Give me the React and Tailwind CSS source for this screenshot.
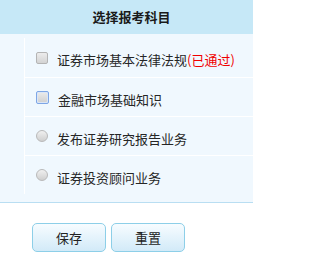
import React from 'react';

const subjects = [
  { name: '证券市场基本法律法规', passed: true, type: 'box' },
  { name: '金融市场基础知识', type: 'box', focus: true },
  { name: '发布证券研究报告业务', type: 'radio' },
  { name: '证券投资顾问业务', type: 'radio' },
];

function Mark({ type, focus }) {
  if (type === 'radio') {
    return (
      <span className="w-[12px] h-[12px] rounded-full border border-[#b9b9b9] bg-gradient-to-b from-[#f0f0f0] to-[#cfcfcf] shrink-0" />
    );
  }
  if (focus) {
    return (
      <span className="w-[13px] h-[13px] rounded-[2px] border border-[#7ea6e6] bg-[#dbe6f6] p-[1px] shrink-0">
        <span className="block w-full h-full rounded-[1px] bg-gradient-to-b from-[#e9e9e9] to-[#d2d2d2]" />
      </span>
    );
  }
  return (
    <span className="w-[12px] h-[12px] rounded-[2px] border border-[#b4b4b4] bg-gradient-to-b from-[#ececec] to-[#d3d3d3] shrink-0" />
  );
}

export default function App() {
  return (
    <div className="w-[253px] h-[264px] bg-white text-[13px] text-[#262626] font-['Noto_Sans_CJK_SC','Noto_Sans',sans-serif] overflow-hidden">
      <div className="h-[34px] bg-[#c6e8f7] flex items-center justify-center pl-[10px] font-bold text-[#1a1a1a]">
        选择报考科目
      </div>
      <div className="bg-[#f0f8fe] border-b border-[#b9def2] pt-[4px] pb-[8px] flex">
        <div className="w-[25px] border-r border-white shrink-0" />
        <div className="flex-1">
          {subjects.map((s, i) => (
            <div
              key={s.name}
              className={`h-[39px] flex items-center pl-[11px] gap-[9px] ${i > 0 ? 'border-t border-white' : ''}`}
            >
              <Mark type={s.type} focus={s.focus} />
              <span className="leading-none pt-[4px] whitespace-nowrap">
                {s.name}
                {s.passed && <span className="text-[#f00000]">(已通过)</span>}
              </span>
            </div>
          ))}
        </div>
      </div>
      <div className="flex gap-[5px] pl-[32px] pt-[20px]">
        <button className="w-[74px] h-[29px] rounded-[5px] border border-[#8dcfe8] bg-gradient-to-b from-[#f7fcff] to-[#d2eaf8] text-[13px] text-[#222]">
          保存
        </button>
        <button className="w-[74px] h-[29px] rounded-[5px] border border-[#8dcfe8] bg-gradient-to-b from-[#f7fcff] to-[#d2eaf8] text-[13px] text-[#222]">
          重置
        </button>
      </div>
    </div>
  );
}
